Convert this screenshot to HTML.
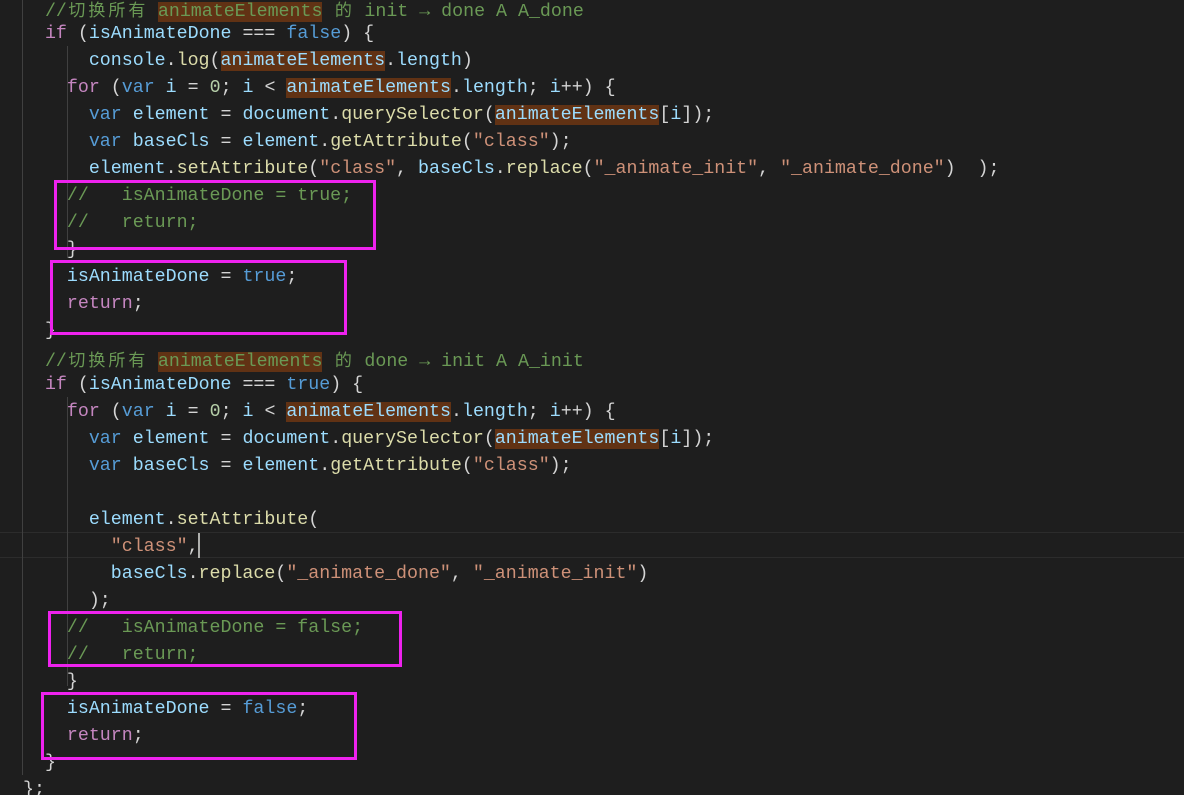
<!DOCTYPE html>
<html><head><meta charset="utf-8"><style>
html,body{margin:0;padding:0;background:#1e1e1e;width:1184px;height:795px;overflow:hidden;position:relative}
#w{position:absolute;left:0;top:2px;width:1184px;height:795px}
.l{position:absolute;left:23px;height:27px;line-height:27px;white-space:pre;font-family:"Liberation Mono","Noto Sans CJK SC",monospace;font-size:18.3px;color:#d4d4d4}
.k{color:#c586c0}.b{color:#569cd6}.v{color:#9cdcfe}.f{color:#dcdcaa}.s{color:#ce9178}.c{color:#6a9955}.n{color:#b5cea8}
.h{background:#613214}
.cj{display:inline-block;width:20px;text-align:center;font-family:"Noto Sans CJK SC",sans-serif;font-size:17px}
.g{position:absolute;width:1px;background:#404040}
.box{position:absolute;border:3px solid #ee22ee;box-sizing:border-box}
</style></head><body>
<div style="position:absolute;left:0;top:532px;width:1184px;height:26px;border-top:1px solid #2c2c2c;border-bottom:1px solid #2c2c2c;box-sizing:border-box"></div>
<div class="g" style="left:22px;top:0;height:775px"></div>
<div class="g" style="left:67px;top:46px;height:212px"></div>
<div class="g" style="left:67px;top:397px;height:289px"></div>
<div style="position:absolute;left:198px;top:533px;width:2px;height:25px;background:#aeafad"></div>
<div id="w">
<div class="l c" style="top:-7px">  //<span class="cj">切</span><span class="cj">换</span><span class="cj">所</span><span class="cj">有</span> <span class="h">animateElements</span> <span class="cj">的</span> init → done A A_done</div>
<div class="l" style="top:19px">  <span class="k">if</span> (<span class="v">isAnimateDone</span> === <span class="b">false</span>) {</div>
<div class="l" style="top:46px">      <span class="v">console</span>.<span class="f">log</span>(<span class="v h">animateElements</span>.<span class="v">length</span>)</div>
<div class="l" style="top:73px">    <span class="k">for</span> (<span class="b">var</span> <span class="v">i</span> = <span class="n">0</span>; <span class="v">i</span> &lt; <span class="v h">animateElements</span>.<span class="v">length</span>; <span class="v">i</span>++) {</div>
<div class="l" style="top:100px">      <span class="b">var</span> <span class="v">element</span> = <span class="v">document</span>.<span class="f">querySelector</span>(<span class="v h">animateElements</span>[<span class="v">i</span>]);</div>
<div class="l" style="top:127px">      <span class="b">var</span> <span class="v">baseCls</span> = <span class="v">element</span>.<span class="f">getAttribute</span>(<span class="s">"class"</span>);</div>
<div class="l" style="top:154px">      <span class="v">element</span>.<span class="f">setAttribute</span>(<span class="s">"class"</span>, <span class="v">baseCls</span>.<span class="f">replace</span>(<span class="s">"_animate_init"</span>, <span class="s">"_animate_done"</span>)  );</div>
<div class="l c" style="top:181px">    //   isAnimateDone = true;</div>
<div class="l c" style="top:208px">    //   return;</div>
<div class="l" style="top:235px">    }</div>
<div class="l" style="top:262px">    <span class="v">isAnimateDone</span> = <span class="b">true</span>;</div>
<div class="l" style="top:289px">    <span class="k">return</span>;</div>
<div class="l" style="top:316px">  }</div>
<div class="l c" style="top:343px">  //<span class="cj">切</span><span class="cj">换</span><span class="cj">所</span><span class="cj">有</span> <span class="h">animateElements</span> <span class="cj">的</span> done → init A A_init</div>
<div class="l" style="top:370px">  <span class="k">if</span> (<span class="v">isAnimateDone</span> === <span class="b">true</span>) {</div>
<div class="l" style="top:397px">    <span class="k">for</span> (<span class="b">var</span> <span class="v">i</span> = <span class="n">0</span>; <span class="v">i</span> &lt; <span class="v h">animateElements</span>.<span class="v">length</span>; <span class="v">i</span>++) {</div>
<div class="l" style="top:424px">      <span class="b">var</span> <span class="v">element</span> = <span class="v">document</span>.<span class="f">querySelector</span>(<span class="v h">animateElements</span>[<span class="v">i</span>]);</div>
<div class="l" style="top:451px">      <span class="b">var</span> <span class="v">baseCls</span> = <span class="v">element</span>.<span class="f">getAttribute</span>(<span class="s">"class"</span>);</div>
<div class="l" style="top:505px">      <span class="v">element</span>.<span class="f">setAttribute</span>(</div>
<div class="l" style="top:532px">        <span class="s">"class"</span>,</div>
<div class="l" style="top:559px">        <span class="v">baseCls</span>.<span class="f">replace</span>(<span class="s">"_animate_done"</span>, <span class="s">"_animate_init"</span>)</div>
<div class="l" style="top:586px">      );</div>
<div class="l c" style="top:613px">    //   isAnimateDone = false;</div>
<div class="l c" style="top:640px">    //   return;</div>
<div class="l" style="top:667px">    }</div>
<div class="l" style="top:694px">    <span class="v">isAnimateDone</span> = <span class="b">false</span>;</div>
<div class="l" style="top:721px">    <span class="k">return</span>;</div>
<div class="l" style="top:748px">  }</div>
<div class="l" style="top:775px">};</div>
</div>
<div class="box" style="left:54px;top:180px;width:322px;height:70px"></div>
<div class="box" style="left:50px;top:260px;width:297px;height:75px"></div>
<div class="box" style="left:48px;top:611px;width:354px;height:56px"></div>
<div class="box" style="left:41px;top:692px;width:316px;height:68px"></div>
</body></html>
